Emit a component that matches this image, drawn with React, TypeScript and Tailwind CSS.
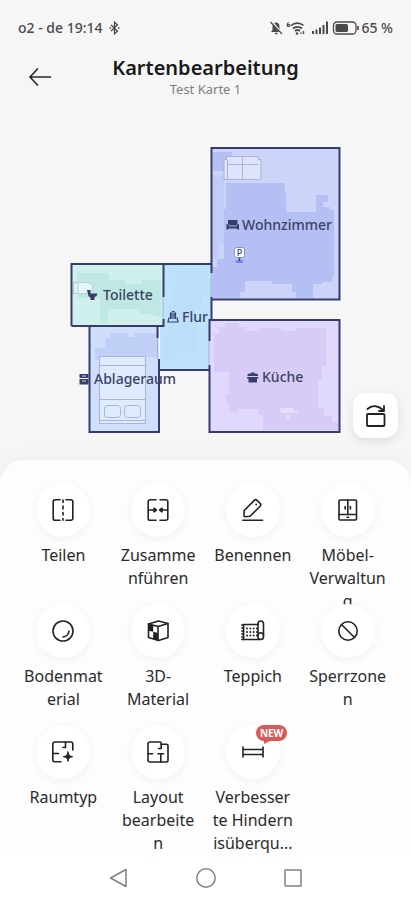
import type { ReactNode } from 'react';

const line = {
  width: 24,
  height: 24,
  viewBox: '0 0 24 24',
  fill: 'none',
  stroke: '#222222',
  strokeWidth: 1.6,
  strokeLinecap: 'round' as const,
  strokeLinejoin: 'round' as const,
};

const SplitIcon = () => (
  <svg {...line}>
    <path d="M9 1.800H4A1.800 1.800 0 0 0 2.200 3.600v16.800A1.800 1.800 0 0 0 4 22.200h5M15 1.800h5a1.800 1.800 0 0 1 1.800 1.800v16.800a1.800 1.800 0 0 1-1.800 1.800h-5" />
    <path d="M12 2v2.500M12 8v3M12 14.500v2.500M12 20.500v1.700" />
  </svg>
);

const MergeIcon = () => (
  <svg {...line}>
    <path d="M10 1.800H4A1.800 1.800 0 0 0 2.200 3.600v16.800A1.800 1.800 0 0 0 4 22.200h6M14 1.800h6a1.800 1.800 0 0 1 1.800 1.800v16.800a1.800 1.800 0 0 1-1.800 1.800h-6" />
    <path d="M2.500 12H9M21.500 12H15" />
    <path d="M8 10.200 10.300 12 8 13.800zM16 10.200 13.700 12 16 13.800z" fill="#222222" />
  </svg>
);

const RenameIcon = () => (
  <svg {...line}>
    <path d="M3.200 12.500 13.300 2.400a2 2 0 0 1 2.800 0l3 3a2 2 0 0 1 0 2.800L9 18.300l-4.600.4a1.200 1.200 0 0 1-1.400-1.400z" />
    <circle cx="15.200" cy="6.500" r=".9" fill="#222222" stroke="none" />
    <path d="M1.800 22.200h19.700" />
  </svg>
);

const CabinetIcon = () => (
  <svg {...line}>
    <rect x="3" y="2" width="17.500" height="20" rx="1" />
    <path d="M11.800 2v14.500M3 16.500h17.500M9.200 8.500v2.500M14.400 8.500v2.500M11 19.300h1.600" />
  </svg>
);

const BallIcon = () => (
  <svg {...line}>
    <circle cx="12" cy="12" r="10" />
    <path d="M18 12a7 7 0 0 1-6 6" />
  </svg>
);

// cube with a checkered left side
const CubeIcon = () => (
  <svg {...line}>
    <path d="M12.500 2 22 4.500v14L12.500 21.500 2.500 18.500V5z" />
    <path d="M2.500 5l9.500 2.500 10-3M12 7.500v14" />
    <path d="M2.500 5 7.200 6.300v6.500l-4.700-1zM7.200 12.800 12 14v7.500l-4.800-1.500z" fill="#222222" stroke="none" />
  </svg>
);

const CarpetIcon = () => (
  <svg {...line}>
    <path d="M17 5.500H2.500v15H19" />
    <path d="M.8 6h2M.8 9h2M.8 12h2M.8 15h2M.8 18h2M.8 20.500h2" />
    <rect x="17" y="2" width="5.500" height="18.500" rx="2.700" />
    <path d="M17 16.500a2.700 2.700 0 0 1 5.500 0" />
    <path d="M6 9.500h10M6 13h10M6 16.500h10" strokeDasharray="0.1 3.200" strokeWidth="1.900" />
  </svg>
);

const ForbidIcon = () => (
  <svg {...line}>
    <circle cx="12" cy="12" r="9.200" />
    <path d="m5.500 5.500 13 13" />
  </svg>
);

const RoomTypeIcon = () => (
  <svg {...line}>
    <path d="M10 21.800H3.800a2 2 0 0 1-2-2V4a2 2 0 0 1 2-2h16a2 2 0 0 1 2 2v6" />
    <path d="M1.800 13.500H7.500M14.500 2v5.500H12" />
    <path d="M17 12c.6 3.300 1.400 4.100 4.700 4.700-3.300.6-4.100 1.400-4.700 4.700-.6-3.300-1.400-4.100-4.700-4.700 3.300-.6 4.100-1.400 4.700-4.700z" fill="#222222" strokeWidth="1" />
  </svg>
);

const LayoutIcon = () => (
  <svg {...line}>
    <path d="M14 2H4a2 2 0 0 0-2 2v16a2 2 0 0 0 2 2h16.500a1.500 1.500 0 0 0 1.500-1.500V5.700a1.500 1.500 0 0 0-1.500-1.500H15.200V3.200A1.200 1.200 0 0 0 14 2z" />
    <path d="M15.200 4v4.500H12.500M2 13.800h4.500M12 13.800h5.500M14.800 13.800V22" />
  </svg>
);

const BarrierIcon = () => (
  <svg {...line}>
    <path d="M2 7v10M22 7v10M2 9.500h20M2 14.500h20" />
  </svg>
);

type Tool = { label: string; icon: ReactNode; isNew?: boolean };

const tools: Tool[] = [
  { label: 'Teilen', icon: <SplitIcon /> },
  { label: 'Zusamme\nnführen', icon: <MergeIcon /> },
  { label: 'Benennen', icon: <RenameIcon /> },
  { label: 'Möbel-\nVerwaltun\ng', icon: <CabinetIcon /> },
  { label: 'Bodenmat\nerial', icon: <BallIcon /> },
  { label: '3D-\nMaterial', icon: <CubeIcon /> },
  { label: 'Teppich', icon: <CarpetIcon /> },
  { label: 'Sperrzone\nn', icon: <ForbidIcon /> },
  { label: 'Raumtyp', icon: <RoomTypeIcon /> },
  { label: 'Layout\nbearbeite\nn', icon: <LayoutIcon /> },
  { label: 'Verbesser\nte Hindern\nisüberqu...', icon: <BarrierIcon />, isNew: true },
];

function StatusBar() {
  return (
    <div className="flex h-14 items-center justify-between px-[18px] text-sm font-medium text-[#4a4a4a]">
      <div className="flex items-center gap-1.5">
        <span>o2 - de 19:14</span>
        <svg width="11" height="14" viewBox="0 0 11 14" fill="none" stroke="#4a4a4a" strokeWidth="1.300">
          <path d="M2 4l6.500 6L5.500 12.800V1.200L8.500 4 2 10" />
          <path d="M.5 7h1.500M9 7h1.500" strokeWidth="1.600" />
        </svg>
      </div>
      <div className="flex items-center">
        <svg width="92" height="16" viewBox="0 0 92 16" fill="none" stroke="#4a4a4a">
          <path d="M2 12h10l-1.500-2V6.500C10.500 4 9 2.500 7 2.500S3.500 4 3.500 6.500V10z" fill="#4a4a4a" stroke="none" />
          <path d="M6 13.500h2.500" strokeWidth="1.500" />
          <path d="M2.500 1.500l10.500 12" stroke="#f6f6f6" strokeWidth="2" />
          <path d="M1.500 2l11.500 12" strokeWidth="1.200" />
          <path d="M20 2.500c-2 0-2.500 4-.5 4s1.700-2.500-.7-1.900" strokeWidth="1.200" />
          <path d="M22 5.500c3.500-3.300 9-3.300 12.500 0M24 8.500c2.500-2.300 6.500-2.300 9 0M26 11c1.500-1.200 3.500-1.200 5 0" strokeWidth="1.700" />
          <circle cx="28" cy="13.500" r="1.300" fill="#4a4a4a" stroke="none" />
          <path d="M32 12.500v1.500M34.500 14v-3" strokeWidth="1.400" />
          <path d="M44 14v-3M47.500 14v-4.500M51 14V7.500M54.500 14V5M58 14V1.500" strokeWidth="2" />
          <rect x="64.500" y="2" width="22.500" height="12" rx="3.500" strokeWidth="1.300" />
          <rect x="66.500" y="4" width="12.500" height="8" rx="1.500" fill="#4a4a4a" stroke="none" />
          <path d="M89 6v4" strokeWidth="1.600" />
        </svg>
        <span>65 %</span>
      </div>
    </div>
  );
}

function Header() {
  return (
    <header className="relative pb-[17px] text-center">
      <button aria-label="Zurück" className="absolute left-7 top-2">
        <svg width="24" height="26" viewBox="0 0 24 26" fill="none" stroke="#2a2a2a" strokeWidth="1.700" strokeLinecap="round" strokeLinejoin="round">
          <path d="M22.500 13H2M9.500 5 2 13l7.500 8" />
        </svg>
      </button>
      <h1 className="text-xl leading-[23px] font-semibold text-[#1a1a1a]">Kartenbearbeitung</h1>
      <p className="text-[13px] leading-5 text-[#808080]">Test Karte 1</p>
    </header>
  );
}

function FloorPlan() {
  return (
    <svg
      className="mx-auto block h-[300px] w-[290px]"
      viewBox="61 140 290 300"
      fill="none"
      stroke="#363c6c"
      strokeWidth="2"
    >
      {/* floors */}
      <g stroke="none">
        <path d="M163 264h48v56h-2v50h-49v-44h3z" fill="#bfe2fb" />
        <path d="M177 268h27v6h4v22h-6v13h-8v14h3v30h-20v6h-14v-28h6v-26h4v-20h4z" fill="#b9defa" opacity=".6" />
        <rect x="211" y="148" width="128" height="151" fill="#ccd4f9" />
        <path d="M213 152h19v9h-8v10h-11zM226 183h59v9h1v20h30v-17h12v7h-5v5h7v3h4v67h-2v5h-10v2h-9v14h-17v-6h-4v-8h-20v-3h-27v11h-5v6h-28v-31h5v-8h7v-50h2z" fill="#b4bff4" />
        <path d="M212 175h12v70h-6v14h-6z" fill="#c3ccf8" />
        <rect x="71" y="264" width="92" height="62" fill="#d0f0ed" />
        <path d="M77 273h32v7h16v4h17v-4h19v36h-7v-2h-15v-5h-31v14h-8v-25h-22v-4h-4v-13h3z" fill="#bfe8e2" />
        <rect x="89" y="326" width="70" height="106" fill="#cfdefb" />
        <path d="M105 338h5v-5h18v4h6v-4h23v24h-16v6h-10v5h-27v-8h-9v-12h10z" fill="#bfcff6" />
        <rect x="209" y="320" width="130" height="112" fill="#e0d9fb" />
        <path d="M225 323h14v4h6v4h14v-3h22v3h15v-3h30v38h-4v14h-4v28h6v8h8v6h6v8h-75v-15h-5v-6h-20v3h-9v-9h-3v-9h3v-22h-15v-38h5v-7h6z" fill="#d6ccf6" />
        <path d="M280 408h14v3h4v2h-17zM286 415h4v4h-4z" fill="#e4defb" />
      </g>

      {/* furniture */}
      <g stroke="#aab3d6" strokeWidth="1">
        <path d="M226.500 156.500h32v3h2.500v20h-37v-20h2.500z" fill="#dfe3fa" />
        <path d="M227 164.500h31M242.500 156.500v23M227.500 160v19" />
        <rect x="73.500" y="282.500" width="7" height="11" fill="#ddf1f3" stroke="#b5c9d5" />
        <path d="M78 282.500h8c9 0 9 11 0 11h-8z" fill="#e6f6f7" stroke="#b9d2da" />
        <rect x="99.500" y="356.500" width="46" height="67" fill="#deeafd" />
        <path d="M99.500 365.500h46M99.500 399.500h46M99.500 420.500h46" />
        <rect x="104.500" y="405.500" width="16" height="12" rx="3" />
        <rect x="124.500" y="405.500" width="16" height="12" rx="3" />
      </g>

      {/* walls */}
      <path d="M211.500 273V148H339.500V299.500H211.500" />
      <path d="M211.500 297v22.500M71.500 326V264H211M163.500 264v33M163.500 319v7H71.500" />
      <path d="M157.500 326v12M159 359v73H89.500V326M159 370h50.500" />
      <path d="M209.500 341V320H339.500V432H209.500V365" />
      <path d="M211 273v24M163 297v22M157.500 338v21M209 341v24" stroke="#9db2dd" strokeWidth="1" />

      {/* charging dock */}
      <ellipse cx="239.500" cy="261.500" rx="4" ry="1.500" fill="#7e80e6" stroke="none" />
      <path d="M239.500 257v4" strokeWidth="1.500" />
      <rect x="234.500" y="247.500" width="10" height="10" rx="2" fill="#fff" stroke="#8c93c4" strokeWidth="1" />

      {/* room icons */}
      <g fill="#363c6c" stroke="none">
        <path d="M228 220h9.500v3.500l-1.500 2h-6.500l-1.500-2zM226.500 224l2 .5.800 2h7l.700-2 2-.5v5.500h-1.500l-.5-1h-8.500l-.5 1h-1.500z" />
        <path d="M87 290h3.500v3.500h7a4 4 0 0 1-3 3.500v3h-4v-2.500c-1.700-.7-2.500-2-2.500-3.800z" />
        <path d="M79.500 374h9v4h-9zM79.500 379h9v5.500h-9z" />
        <path d="M247.500 374.500 249 373.500h2v-1h3.500v1h2l1.500 1v1.500h-10.500zM247 377h11.500v1.500h-1.500v4h-8.500v-4H247z" />
      </g>
      <path d="M82 376h4M82 381h4" stroke="#c6d3f6" strokeWidth="1" />
      <path d="M169 317.500l-1 4.500h10l-1-4.500M170.500 319v-6h1.500v6M174 319v-6h1.500v6M172 311.500h2.500" strokeWidth="1.200" />

      <g fill="#3c4266" stroke="none" fontSize="14" fontWeight="500">
        <text x="242" y="230">Wohnzimmer</text>
        <text x="103" y="300">Toilette</text>
        <text x="182" y="322">Flur</text>
        <text x="94" y="384">Ablageraum</text>
        <text x="262" y="382">Küche</text>
        <text x="239.500" y="256" fontSize="9" textAnchor="middle">P</text>
      </g>
    </svg>
  );
}

function ToolButton({ label, icon, isNew }: Tool) {
  return (
    <button className="flex flex-col items-center">
      <span className="relative flex size-[54px] shrink-0 items-center justify-center rounded-full bg-white shadow-[0_2px_10px_rgba(0,0,0,0.05)]">
        {icon}
        {isNew && (
          <span className="absolute top-0 left-[30px] rounded-full bg-[#d95b58] px-1 text-[10px] leading-4 font-bold text-white">
            NEW
            <span className="absolute left-2 top-[15px] border-t-4 border-r-8 border-t-[#d95b58] border-r-transparent" />
          </span>
        )}
      </span>
      <span className="mt-[7px] whitespace-pre text-center text-base leading-[23px] text-[#2b2b2b]">{label}</span>
    </button>
  );
}

export default function App() {
  return (
    <div className="flex min-h-screen flex-col bg-[#f6f6f6] font-['Noto_Sans',sans-serif]">
      <StatusBar />
      <Header />
      <main className="flex flex-1 flex-col">
        <section className="relative pt-6 pb-5">
          <FloorPlan />
          <button
            aria-label="Karte drehen"
            className="absolute right-[13px] bottom-[22px] flex size-[45px] items-center justify-center rounded-xl bg-white shadow-[0_3px_10px_rgba(0,0,0,0.1)]"
          >
            <svg {...line} strokeWidth="1.800">
              <rect x="3" y="10" width="17.500" height="12" rx="1" />
              <path d="M3.500 5C7.500 1 14 1 19.500 6.500M20 2v5h-5" />
            </svg>
          </button>
        </section>
        <section className="flex-1 rounded-t-3xl bg-[#fdfdfd] px-4 pt-[23px] pb-2 shadow-[0_-4px_16px_rgba(0,0,0,0.03)]">
          <div className="grid auto-rows-[121px] grid-cols-4 items-start">
            {tools.map((tool) => (
              <ToolButton key={tool.label} {...tool} />
            ))}
          </div>
        </section>
      </main>
      <nav className="flex h-[45px] items-center justify-center gap-[65px] bg-white">
        <button aria-label="Zurück">
          <svg width="22" height="22" viewBox="0 0 22 22" fill="none" stroke="#808080" strokeWidth="1.500" strokeLinejoin="round">
            <path d="M18 2.500v17L2.500 11z" />
          </svg>
        </button>
        <button aria-label="Startseite">
          <svg width="22" height="22" viewBox="0 0 22 22" fill="none" stroke="#808080" strokeWidth="1.500">
            <circle cx="11" cy="11" r="9.200" />
          </svg>
        </button>
        <button aria-label="Übersicht">
          <svg width="22" height="22" viewBox="0 0 22 22" fill="none" stroke="#808080" strokeWidth="1.500">
            <rect x="3" y="3" width="16" height="16" rx=".5" />
          </svg>
        </button>
      </nav>
    </div>
  );
}
